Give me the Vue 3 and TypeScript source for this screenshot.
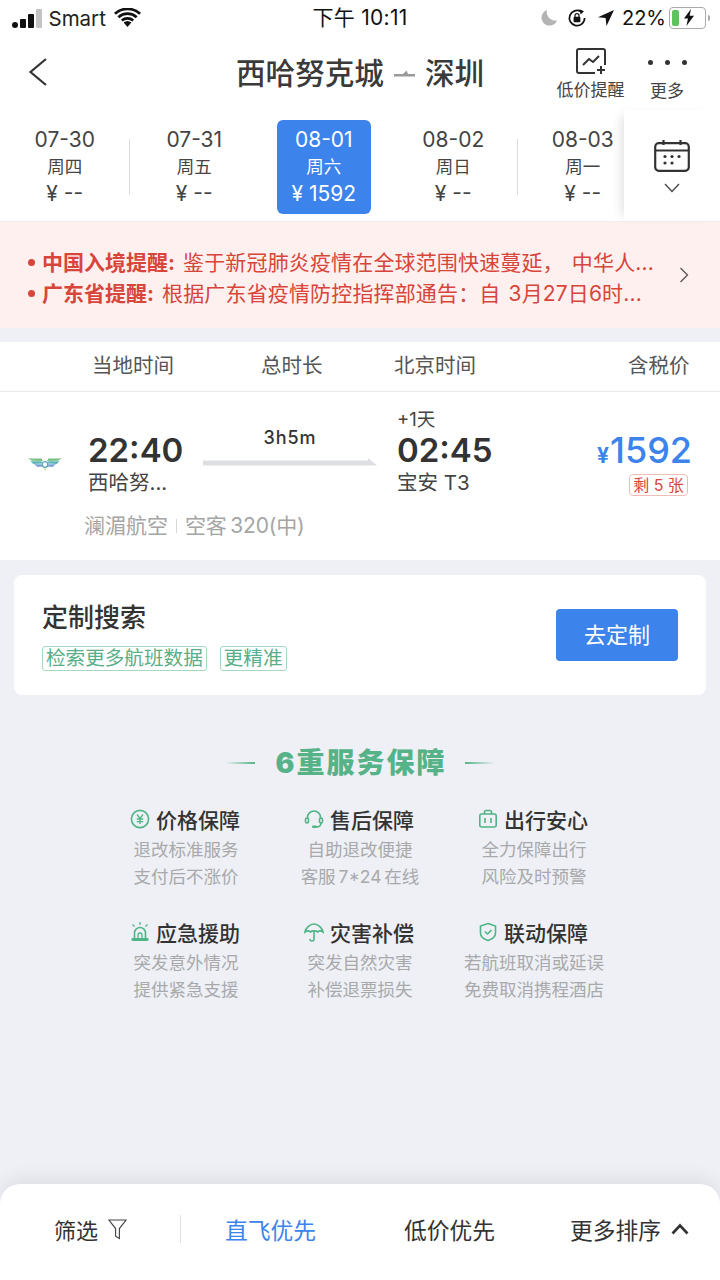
<script setup lang="ts">
interface DayItem { date: string; week: string; price: string; active?: boolean; sep?: boolean }
const days: DayItem[] = [
  { date: '07-30', week: '周四', price: '¥ --', sep: true },
  { date: '07-31', week: '周五', price: '¥ --' },
  { date: '08-01', week: '周六', price: '¥ 1592', active: true },
  { date: '08-02', week: '周日', price: '¥ --', sep: true },
  { date: '08-03', week: '周一', price: '¥ --' },
]
const services = [
  { icon: 'yen', title: '价格保障', lines: ['退改标准服务', '支付后不涨价'] },
  { icon: 'phone', title: '售后保障', lines: ['自助退改便捷', '客服 7*24 在线'] },
  { icon: 'bag', title: '出行安心', lines: ['全力保障出行', '风险及时预警'] },
  { icon: 'alarm', title: '应急援助', lines: ['突发意外情况', '提供紧急支援'] },
  { icon: 'umbrella', title: '灾害补偿', lines: ['突发自然灾害', '补偿退票损失'] },
  { icon: 'shield', title: '联动保障', lines: ['若航班取消或延误', '免费取消携程酒店'] },
]
</script>

<template>
  <div class="page">
    <div class="status">
      <div class="st-left">
        <span class="bars"><i class="b1"></i><i class="b2"></i><i class="b3"></i><i class="b4"></i></span>
        <span class="carrier">Smart</span>
        <svg class="wifi" width="27" height="20" viewBox="0 0 27 20">
          <path d="M13.5 19 9.6 14.6a6 6 0 0 1 7.8 0Z" fill="#111" />
          <path d="M6.9 11.6a10 10 0 0 1 13.2 0l-1.8 2a7.4 7.4 0 0 0-9.6 0Z" fill="#111" />
          <path d="M3.4 8.2a15.2 15.2 0 0 1 20.2 0l-1.9 2a12.4 12.4 0 0 0-16.4 0Z" fill="#111" />
          <path d="M0 4.7a20.2 20.2 0 0 1 27 0l-1.9 2.1a17.4 17.4 0 0 0-23.2 0Z" fill="#111" />
        </svg>
      </div>
      <div class="st-time">下午 10:11</div>
      <div class="st-right">
        <svg width="18" height="18" viewBox="0 0 18 18"><path d="M7 1a8 8 0 1 0 10 10.4A8.5 8.5 0 0 1 7 1Z" fill="#b4b4b4" /></svg>
        <svg class="lock" width="20" height="20" viewBox="0 0 20 20">
          <path d="M17.6 10A7.6 7.6 0 1 1 14 3.6" fill="none" stroke="#111" stroke-width="1.7" />
          <path d="M12.6 1.2 17 3.2 13.6 6.4Z" fill="#111" />
          <rect x="6.6" y="8.8" width="6.8" height="5.4" rx="1" fill="#111" />
          <path d="M8 9V7.6a2 2 0 0 1 4 0V9" fill="none" stroke="#111" stroke-width="1.2" />
        </svg>
        <svg width="16" height="16" viewBox="0 0 16 16"><path d="M16 0 0 7.2l7.6.9L8.5 16Z" fill="#111" /></svg>
        <span class="pct">22%</span>
        <span class="batt">
          <i class="level"></i>
          <svg class="bolt" width="12" height="17" viewBox="0 0 12 17"><path d="M8 0 1 9.6h4L3.4 17 11 6.8H6.6Z" fill="#111" /></svg>
        </span>
        <i class="nub"></i>
      </div>
    </div>

    <header class="nav">
      <svg class="back" width="20" height="30" viewBox="0 0 20 30"><path d="M18 2 2.5 15 18 28" fill="none" stroke="#333" stroke-width="2.2" /></svg>
      <div class="route">
        <span>西哈努克城</span>
        <svg class="route-arrow" width="21" height="8" viewBox="0 0 21 8"><path d="M0 7.500V5h9l3.500-3.500L14 5h7v2.500Z" fill="#9a9a9a" /></svg>
        <span>深圳</span>
      </div>
      <div class="nav-act alert">
        <svg width="32" height="28" viewBox="0 0 32 28">
          <path d="M20 26H4a2 2 0 0 1-2-2V4a2 2 0 0 1 2-2h24a2 2 0 0 1 2 2v14" fill="none" stroke="#333" stroke-width="2" />
          <path d="M8 18l6-6 4 3 6-6" fill="none" stroke="#333" stroke-width="2" />
          <path d="M26 19v8M22 23h8" stroke="#333" stroke-width="2" />
        </svg>
        <span>低价提醒</span>
      </div>
      <div class="nav-act more">
        <span class="dots"><i></i><i></i><i></i></span>
        <span>更多</span>
      </div>
    </header>

    <section class="strip">
      <div class="days">
        <div v-for="d in days" :key="d.date" class="day" :class="{ active: d.active, sep: d.sep }">
          <div class="day-box">
            <span class="d-date">{{ d.date }}</span>
            <span class="d-week">{{ d.week }}</span>
            <span class="d-price">{{ d.price }}</span>
          </div>
        </div>
      </div>
      <div class="cal">
        <svg width="36" height="32" viewBox="0 0 36 32">
          <rect x="1.2" y="3.2" width="33.6" height="27.6" rx="3.5" fill="none" stroke="#333" stroke-width="2.2" />
          <path d="M1.5 10.5h33" stroke="#333" stroke-width="2.2" />
          <path d="M9.5 0v5M26.5 0v5" stroke="#333" stroke-width="2.2" />
          <g fill="#333">
            <circle cx="11" cy="16.5" r="1.6" /><circle cx="18" cy="16.5" r="1.6" /><circle cx="25" cy="16.5" r="1.6" />
            <circle cx="11" cy="23" r="1.6" /><circle cx="18" cy="23" r="1.6" />
          </g>
        </svg>
        <svg width="16" height="10" viewBox="0 0 16 10"><path d="M1 1l7 7.5L15 1" fill="none" stroke="#444" stroke-width="1.3" /></svg>
      </div>
    </section>

    <section class="notice">
      <div class="notice-text">
        <p><i class="dot"></i><b>中国入境提醒:</b> 鉴于新冠肺炎疫情在全球范围快速蔓延， 中华人...</p>
        <p><i class="dot"></i><b>广东省提醒:</b> 根据广东省疫情防控指挥部通告：自 3月27日6时...</p>
      </div>
      <svg width="10" height="16" viewBox="0 0 10 16"><path d="M1.5 1l7 7-7 7" fill="none" stroke="#555" stroke-width="1.3" /></svg>
    </section>

    <section class="thead">
      <span class="th t1">当地时间</span>
      <span class="th t2">总时长</span>
      <span class="th t3">北京时间</span>
      <span class="th t4">含税价</span>
    </section>

    <section class="flight">
      <div class="f-main">
        <svg class="logo" width="34" height="14" viewBox="0 0 34 14">
          <path d="M0 .5h13.500L15 3 4 2.800Z" fill="#78c184" />
          <path d="M34 .5H20.500L19 3l11-.2Z" fill="#78c184" />
          <path d="M2.500 3.300H13.500l.8 2.200-9 .4Z" fill="#5fb3b8" />
          <path d="M31.500 3.300H20.500l-.8 2.200 9 .4Z" fill="#5fb3b8" />
          <path d="M6 6.300h7.500l1 2.200-5 .6Z" fill="#7aa5d8" />
          <path d="M28 6.300h-7.500l-1 2.200 5 .6Z" fill="#7aa5d8" />
          <circle cx="17" cy="6.500" r="2.800" fill="#fff" stroke="#58a8b4" stroke-width="1.300" />
          <path d="M15.500 10.500h3l-1.500 2.500Z" fill="#d8da9a" />
        </svg>
        <div class="f-dep">
          <div class="f-time">22:40</div>
          <div class="f-place">西哈努...</div>
        </div>
        <div class="f-mid">
          <span class="f-dur">3h5m</span>
          <svg class="f-line" width="174" height="8" viewBox="0 0 174 8"><path d="M0 2.5h165V0l9 7.5H0Z" fill="#dedfe2" /></svg>
        </div>
        <div class="f-arr">
          <div class="f-plus">+1天</div>
          <div class="f-time">02:45</div>
          <div class="f-place">宝安 T3</div>
        </div>
        <div class="f-price">
          <div class="price"><small>¥</small>1592</div>
          <div class="left-tag">剩 5 张</div>
        </div>
      </div>
      <div class="f-sub"><span>澜湄航空</span><i></i><span class="f-type">空客 320(中)</span></div>
    </section>

    <section class="custom">
      <div class="custom-text">
        <h3>定制搜索</h3>
        <div class="tags"><span>检索更多航班数据</span><span>更精准</span></div>
      </div>
      <button class="go" type="button">去定制</button>
    </section>

    <section class="svc">
      <div class="svc-head">
        <i class="rule left"></i>
        <h2>6重服务保障</h2>
        <i class="rule right"></i>
      </div>
      <div class="svc-grid">
        <div v-for="s in services" :key="s.title" class="svc-item">
          <div class="svc-title">
            <svg width="20" height="20" viewBox="0 0 20 20" fill="none" stroke="#4fb587" stroke-width="1.6">
              <template v-if="s.icon === 'yen'">
                <circle cx="10" cy="10" r="8.6" />
                <path d="M7 5.5 10 9.5l3-4M6.8 10h6.4M6.8 12.6h6.4M10 9.5V15" stroke-width="1.3" />
              </template>
              <template v-else-if="s.icon === 'phone'">
                <path d="M3.5 10V8.5a6.5 6.5 0 0 1 13 0V10" />
                <rect x="1.5" y="9" width="3" height="5" rx="1.5" />
                <rect x="15.5" y="9" width="3" height="5" rx="1.5" />
                <path d="M17 14c0 2.5-2 4-5 4" />
                <rect x="8" y="16.5" width="5" height="2.6" rx="1.3" fill="#4fb587" stroke="none" />
              </template>
              <template v-else-if="s.icon === 'bag'">
                <rect x="1.8" y="5" width="16.4" height="13" rx="2" />
                <path d="M6.5 5V3a1.5 1.5 0 0 1 1.5-1.5h4A1.5 1.5 0 0 1 13.500 3v2M7 9v5M13 9v5" />
              </template>
              <template v-else-if="s.icon === 'alarm'">
                <path d="M4.500 16V11a5.500 5.500 0 0 1 11 0v5" />
                <rect x="1.500" y="16" width="17" height="3" rx="1" fill="#4fb587" stroke="none" />
                <path d="M8 16v-3a2 2 0 0 1 4 0v3" stroke-width="1.300" />
                <path d="M10 0v3M2.500 2.500l2 2M17.500 2.500l-2 2" stroke-width="1.300" />
              </template>
              <template v-else-if="s.icon === 'umbrella'">
                <path d="M1 10C2 5.500 6 2 10 2s8 3.500 9 8c-2-1.500-4-1.500-5.500 0-1-1.500-6-1.500-7 0C5 8.500 3 8.500 1 10Z" />
                <path d="M10 9v8a2 2 0 0 1-4 0" />
              </template>
              <template v-else>
                <path d="M10 1.500 17.500 4v7c0 3.500-3 6-7.500 7.500C5.500 17 2.500 14.500 2.500 11V4Z" />
                <path d="M6.800 9.500 9.500 12l4-4" />
              </template>
            </svg>
            <span>{{ s.title }}</span>
          </div>
          <p v-for="l in s.lines" :key="l">{{ l }}</p>
        </div>
      </div>
    </section>

    <footer class="foot">
      <div class="f-filter">
        <span>筛选</span>
        <svg width="19" height="21" viewBox="0 0 20 22"><path d="M1 1h18l-7 9v10.500L8 18v-8Z" fill="none" stroke="#444" stroke-width="1.200" /></svg>
      </div>
      <i class="f-div"></i>
      <span class="sort on">直飞优先</span>
      <span class="sort low">低价优先</span>
      <div class="sort more-sort">
        <span>更多排序</span>
        <svg width="18" height="12" viewBox="0 0 18 12"><path d="M1.500 10.500 9 2.500l7.500 8" fill="none" stroke="#333" stroke-width="2.600" /></svg>
      </div>
    </footer>
  </div>
</template>

<style>
html, body { margin: 0; background: #eef0f5; }
</style>

<style scoped>
.page {
  width: 720px;
  height: 1280px;
  overflow: hidden;
  display: flex;
  flex-direction: column;
  background: #eef0f5;
  color: #333;
  font-family: Inter, "Noto Sans CJK SC", sans-serif;
}
p, h2, h3 { margin: 0; font-weight: 400; }
i { display: block; font-style: normal; }

.status {
  height: 36px;
  flex: none;
  background: #fff;
  display: flex;
  align-items: center;
  justify-content: space-between;
  position: relative;
  padding: 0 10px 0 12px;
  color: #111;
}
.st-left, .st-right { display: flex; align-items: center; }
.bars { display: flex; align-items: flex-end; gap: 2.5px; height: 19px; }
.bars i { width: 5.500px; border-radius: 1px; background: #111; }
.b1 { height: 6px; border-radius: 3px !important; }
.b2 { height: 9px; }
.b3 { height: 14px; }
.bars .b4 { height: 19px; background: #c4c4c4; }
.carrier { font-size: 20.500px; margin: 0 8px 0 7px; color: #222; }
.st-time { position: absolute; left: 0; right: 0; top: 5px; text-align: center; font-size: 21px; line-height: 26px; letter-spacing: 0.3px; pointer-events: none; }
.lock { margin-left: 9px; }
.st-right svg:nth-child(3) { margin-left: 11px; }
.pct { font-size: 20px; margin: 0 3px 0 8px; }
.batt {
  width: 31px;
  height: 16px;
  border: 1px solid #aaa;
  border-radius: 4px;
  padding: 2px;
  box-sizing: content-box;
  display: flex;
  position: relative;
  margin-right: 2px;
}
.level { width: 7px; height: 100%; border-radius: 2px; background: #5ec35d; }
.bolt { position: absolute; left: 13px; top: 1px; }
.nub { width: 2px; height: 6px; background: #aaa; border-radius: 0 2px 2px 0; }

.nav {
  height: 74px;
  flex: none;
  background: #fff;
  display: flex;
  align-items: center;
  position: relative;
  padding-left: 28px;
}
.back { margin-top: -2px; flex: none; }
.route {
  margin-left: 188px;
  width: 248px;
  flex: none;
  display: flex;
  align-items: center;
  font-size: 29.600px;
  line-height: 40px;
  font-weight: 500;
  color: #3a3a3a;
  white-space: nowrap;
}
.route-arrow { margin: 0 10px; flex: none; }
.nav-act {
  display: flex;
  flex-direction: column;
  align-items: center;
  align-self: flex-start;
  font-size: 17px;
  line-height: 22px;
  color: #444;
  margin-top: 12px;
  flex: none;
}
.alert { margin-left: 72px; width: 69px; gap: 4px; margin-top: 11px; }
.alert span { white-space: nowrap; }
.more { margin-left: 25px; width: 34px; gap: 4px; }
.more span:last-child { white-space: nowrap; }
.dots { display: flex; gap: 12px; height: 28px; align-items: center; }
.dots i { width: 5px; height: 5px; border-radius: 50%; background: #333; }

.strip {
  height: 112px;
  flex: none;
  display: flex;
  background: #fff;
  border-bottom: 1px solid #f0eeee;
  box-sizing: border-box;
}
.days { flex: 1; min-width: 0; display: flex; overflow: hidden; }
.day {
  flex: 0 0 129.500px;
  position: relative;
  display: flex;
  justify-content: center;
  align-items: flex-start;
  padding-top: 10px;
  box-sizing: border-box;
}
.day.sep::after {
  content: "";
  position: absolute;
  right: 0;
  top: 29px;
  height: 56px;
  width: 1px;
  background: #dcdcdc;
}
.day-box {
  width: 94px;
  height: 94px;
  border-radius: 6px;
  display: flex;
  flex-direction: column;
  align-items: center;
  color: #444;
}
.active .day-box { background: #3c83ec; color: #fff; }
.d-date { font-size: 21px; line-height: 24px; margin-top: 8px; }
.d-week { font-size: 17.500px; line-height: 24px; margin-top: 3px; }
.d-price { font-size: 21px; line-height: 24px; margin-top: 3px; white-space: nowrap; }
.cal {
  flex: none;
  width: 96px;
  height: 111px;
  display: flex;
  flex-direction: column;
  align-items: center;
  gap: 11px;
  padding: 30px 0 0 0;
  box-sizing: border-box;
  background: #fff;
  box-shadow: -8px 0 10px -6px rgba(0, 0, 0, 0.13);
  position: relative;
}

.notice {
  height: 106px;
  flex: none;
  background: #fef0ef;
  display: flex;
  align-items: center;
  padding-left: 28px;
  box-sizing: border-box;
  color: #d8453a;
}
.notice-text { width: 651px; margin-top: 6px; font-size: 21px; line-height: 31px; white-space: nowrap; overflow: hidden; letter-spacing: 0.15px; word-spacing: 2px; }
.notice-text p { display: flex; align-items: center; white-space: pre; }
.notice-text b { font-weight: 700; letter-spacing: 0; }
.dot { width: 7px; height: 7px; border-radius: 50%; background: #d8453a; margin-right: 7px; }

.thead {
  margin-top: 14px;
  height: 50px;
  flex: none;
  background: #fff;
  border-bottom: 1px solid #e9e9ec;
  box-sizing: border-box;
  display: flex;
  align-items: center;
  padding: 0 0 5px 92px;
  font-size: 20.500px;
  color: #555;
}
.th { white-space: nowrap; }
.t1 { width: 169px; }
.t2 { width: 133px; }
.t3 { width: 234px; }

.flight {
  height: 168px;
  flex: none;
  background: #fff;
  box-sizing: border-box;
  padding-top: 17px;
}
.f-main { display: flex; align-items: flex-start; padding-left: 28px; }
.logo { flex: none; margin-top: 49px; }
.f-dep { width: 115px; margin-left: 26px; padding-top: 21px; flex: none; }
.f-arr { width: 160px; margin-left: 20px; flex: none; }
.f-time { font-size: 33px; line-height: 40px; font-weight: 600; color: #333; }
.f-place { font-size: 20.500px; line-height: 28px; margin-top: -1px; color: #444; white-space: nowrap; }
.f-plus { font-size: 18.500px; line-height: 21px; color: #444; }
.f-mid { width: 174px; flex: none; display: flex; flex-direction: column; align-items: center; padding-top: 18px; }
.f-dur { font-size: 18px; line-height: 22px; font-weight: 500; letter-spacing: 1px; color: #333; }
.f-line { margin-top: 9px; }
.f-price { width: 135px; flex: none; display: flex; flex-direction: column; align-items: flex-end; padding-top: 21px; }
.price { font-size: 36px; line-height: 40px; color: #3c83ec; font-weight: 500; white-space: nowrap; }
.price small { font-size: 21px; margin-right: 1px; font-weight: 700; }
.left-tag {
  margin: -2px 4px 0 0;
  width: 59px;
  height: 22px;
  box-sizing: border-box;
  border: 1px solid #efbcb8;
  border-radius: 4px;
  font-size: 16px;
  line-height: 20px;
  text-align: center;
  color: #d5483e;
  white-space: nowrap;
}
.f-sub { display: flex; align-items: center; margin: 15px 0 0 84px; font-size: 21px; line-height: 28px; color: #a5a5a5; }
.f-sub i { width: 1px; height: 14px; background: #d8d8d8; margin: 0 8px; }
.f-type { word-spacing: -2px; letter-spacing: -0.2px; }

.custom {
  margin: 15px 14px 0;
  height: 120px;
  flex: none;
  box-sizing: border-box;
  background: #fff;
  border-radius: 8px;
  display: flex;
  align-items: center;
  justify-content: space-between;
  padding: 0 28px;
}
.custom-text { padding-top: 2px; }
.custom h3 { font-size: 26px; line-height: 34px; font-weight: 500; color: #333; }
.tags { display: flex; gap: 13px; margin-top: 11px; }
.tags span {
  height: 25px;
  box-sizing: border-box;
  border: 1px solid #a5d8c0;
  border-radius: 3px;
  padding: 0 3px;
  font-size: 19.600px;
  line-height: 23px;
  color: #57ae87;
  white-space: nowrap;
}
.go {
  width: 122px;
  height: 52px;
  border: 0;
  border-radius: 4px;
  background: #3c83ec;
  color: #fff;
  font: inherit;
  font-size: 22px;
  padding: 0 0 5px;
}

.svc { margin-top: 49px; display: flex; flex-direction: column; align-items: center; }
.svc-head { display: flex; align-items: center; height: 38px; }
.svc-head h2 { font-size: 28px; line-height: 38px; font-weight: 900; color: #56b388; letter-spacing: 2px; margin: 0 19px 0 21px; }
.rule { width: 30px; height: 2px; }
.rule.left { background: linear-gradient(90deg, rgba(86, 179, 136, 0), #56b388); }
.rule.right { background: linear-gradient(90deg, #56b388, rgba(86, 179, 136, 0)); }
.svc-grid { display: grid; grid-template-columns: repeat(3, 174px); row-gap: 26px; margin-top: 21px; }
.svc-item { display: flex; flex-direction: column; align-items: center; }
.svc-title { display: flex; align-items: center; gap: 6px; height: 32px; padding-right: 2px; font-size: 21px; font-weight: 500; color: #333; }
.svc-title svg { flex: none; }
.svc-item p { font-size: 17.500px; line-height: 27px; color: #a8a9ac; white-space: nowrap; word-spacing: -2px; }
.svc-item p:first-of-type { margin-top: 1px; }

.foot {
  margin-top: auto;
  height: 96px;
  flex: none;
  background: #fff;
  border-radius: 20px 20px 0 0;
  box-shadow: 0 -6px 18px rgba(0, 0, 0, 0.07);
  display: flex;
  align-items: center;
  padding-left: 54px;
  font-size: 22.750px;
  color: #333;
  box-sizing: border-box;
  padding-bottom: 6px;
}
.f-filter { display: flex; align-items: center; gap: 10px; width: 126px; flex: none; font-size: 22px; }
.f-div { width: 1px; height: 28px; background: #e2e2e2; flex: none; }
.sort { white-space: nowrap; }
.sort.on { color: #3c83ec; margin-left: 44px; }
.sort.low { margin-left: 88px; }
.more-sort { display: flex; align-items: center; gap: 10px; margin-left: 75px; }
</style>
